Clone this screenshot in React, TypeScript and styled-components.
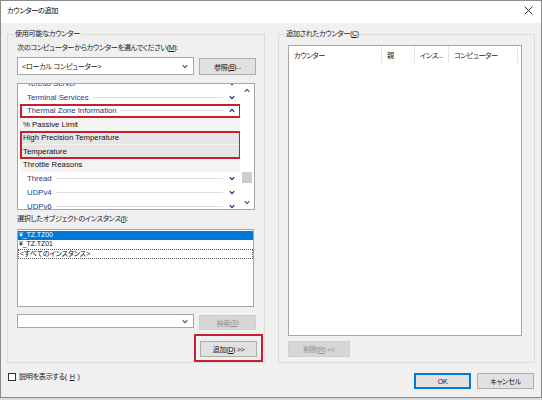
import styled, { createGlobalStyle } from "styled-components";

const GlobalStyle = createGlobalStyle`
  html, body {
    margin: 0;
    padding: 0;
    background: #d9d9d9;
  }
  body {
    font-family: "Liberation Sans", "Noto Sans CJK JP", sans-serif;
    font-size: 7.2px;
    letter-spacing: -0.38px;
    font-feature-settings: "palt";
    color: #1a1a1a;
  }
  * {
    box-sizing: border-box;
  }
`;

interface TreeItem {
  name: string;
  kind: "object" | "counter";
  expanded?: boolean;
  selected?: boolean;
}

const treeGroups: { marked: boolean; items: TreeItem[] }[] = [
  {
    marked: false,
    items: [
      { name: "Teredo Server", kind: "object" },
      { name: "Terminal Services", kind: "object" },
    ],
  },
  {
    marked: true,
    items: [{ name: "Thermal Zone Information", kind: "object", expanded: true }],
  },
  { marked: false, items: [{ name: "% Passive Limit", kind: "counter" }] },
  {
    marked: true,
    items: [
      { name: "High Precision Temperature", kind: "counter", selected: true },
      { name: "Temperature", kind: "counter", selected: true },
    ],
  },
  {
    marked: false,
    items: [
      { name: "Throttle Reasons", kind: "counter" },
      { name: "Thread", kind: "object" },
      { name: "UDPv4", kind: "object" },
      { name: "UDPv6", kind: "object" },
    ],
  },
];

const instances = ["¥_TZ.TZ00", "¥_TZ.TZ01", "<すべてのインスタンス>"];

const columns = [
  { label: "カウンター", width: 93 },
  { label: "親", width: 33 },
  { label: "インス...", width: 34 },
  { label: "コンピューター", width: 69 },
];

const Chevron = ({ up, color }: { up?: boolean; color: string }) => (
  <svg width="6" height="5" viewBox="0 0 6 5">
    <path
      d={up ? "M0.8 3.8 L3 1.4 L5.2 3.8" : "M0.8 1.2 L3 3.6 L5.2 1.2"}
      fill="none"
      stroke={color}
      strokeWidth="1.3"
    />
  </svg>
);

const App = () => {
  return (
    <>
      <GlobalStyle />
      <Window>
        <TitleBar>
          <Title>カウンターの追加</Title>
          <CloseButton>
            <svg width="9" height="9" viewBox="0 0 9 9">
              <path d="M0.5 0.5 L8.5 8.5 M8.5 0.5 L0.5 8.5" stroke="#222" strokeWidth="0.9" />
            </svg>
          </CloseButton>
        </TitleBar>

        <Body>
          <Columns>
            <LeftGroup>
              <Legend>使用可能なカウンター</Legend>
              <Prompt>
                次のコンピューターからカウンターを選んでください(<u>M</u>):
              </Prompt>
              <ComboRow>
                <Combo height={18}>
                  <span>&lt;ローカル コンピューター&gt;</span>
                  <Chevron color="#606060" />
                </Combo>
                <Button width={57} height={17}>
                  参照(<u>B</u>)...
                </Button>
              </ComboRow>

              <TreeBox>
                <TreeScroll>
                  <TreeContent>
                    {treeGroups.map((group, gi) => (
                      <TreeGroup key={gi} marked={group.marked}>
                        {group.items.map((item) =>
                          item.kind === "object" ? (
                            <ObjectRow key={item.name}>
                              <span>{item.name}</span>
                              <Rule />
                              <Chevron up={item.expanded} color="#1b3c84" />
                            </ObjectRow>
                          ) : (
                            <CounterRow key={item.name} selected={item.selected}>
                              {item.name}
                            </CounterRow>
                          )
                        )}
                      </TreeGroup>
                    ))}
                  </TreeContent>
                </TreeScroll>
                <ScrollBar>
                  <ScrollArrow>
                    <Chevron up color="#606060" />
                  </ScrollArrow>
                  <ScrollTrack>
                    <ScrollThumb offset={75} />
                  </ScrollTrack>
                  <ScrollArrow>
                    <Chevron color="#606060" />
                  </ScrollArrow>
                </ScrollBar>
              </TreeBox>

              <Prompt>
                選択したオブジェクトのインスタンス(<u>I</u>):
              </Prompt>
              <InstanceBox>
                {instances.map((name, i) => (
                  <InstanceRow key={name} selected={i === 0} focused={i === 2}>
                    {name}
                  </InstanceRow>
                ))}
              </InstanceBox>

              <SearchRow>
                <Combo height={14}>
                  <span />
                  <Chevron color="#606060" />
                </Combo>
                <Button width={57} height={15} disabled>
                  検索(<u>S</u>)
                </Button>
              </SearchRow>

              <AddFrame>
                <Button width={57} height={16}>
                  追加(<u>D</u>) &gt;&gt;
                </Button>
              </AddFrame>
            </LeftGroup>

            <RightGroup>
              <Legend>
                追加されたカウンター(<u>C</u>)
              </Legend>
              <AddedList>
                <HeaderRow>
                  {columns.map((col) => (
                    <HeaderCell key={col.label} width={col.width}>
                      {col.label}
                    </HeaderCell>
                  ))}
                </HeaderRow>
              </AddedList>
              <Button width={62} height={16} disabled>
                削除(<u>R</u>) &lt;&lt;
              </Button>
            </RightGroup>
          </Columns>

          <Footer>
            <CheckLabel>
              <CheckBox />
              説明を表示する(<u>H</u>)
            </CheckLabel>
            <FooterButtons>
              <Button width={57} height={16} primary>
                OK
              </Button>
              <Button width={57} height={16}>
                キャンセル
              </Button>
            </FooterButtons>
          </Footer>
        </Body>
      </Window>
    </>
  );
};

const Window = styled.div`
  width: 542px;
  height: 398px;
  border: 1px solid #8c8c8c;
  background: #f0f0f0;
  display: flex;
  flex-direction: column;
`;

const TitleBar = styled.div`
  height: 22px;
  background: #ffffff;
  display: flex;
  align-items: center;
  justify-content: space-between;
  padding: 0 8px 4px 6px;
`;

const Title = styled.div`
  color: #000;
`;

const CloseButton = styled.div`
  display: flex;
  align-items: center;
`;

const Body = styled.div`
  flex: 1;
  display: flex;
  flex-direction: column;
  padding: 6px 6px 0 6px;
`;

const Columns = styled.div`
  display: flex;
  gap: 13px;
`;

const GroupBox = styled.fieldset`
  margin: 0;
  height: 334px;
  border: 1px solid #dcdcdc;
  display: flex;
  flex-direction: column;
  align-items: flex-start;
`;

const LeftGroup = styled(GroupBox)`
  width: 258px;
  padding: 0 7px 0 9px;
`;

const RightGroup = styled(GroupBox)`
  width: 257px;
  padding: 0 11px 0 9px;
`;

const Legend = styled.legend`
  line-height: 10px;
  padding: 0 1px;
  margin-left: -3px;
  color: #1a1a1a;
`;

const Prompt = styled.div`
  line-height: 10px;
  margin-top: 4px;
  color: #1a1a1a;
`;

const ComboRow = styled.div`
  display: flex;
  align-items: flex-end;
  gap: 5px;
  margin-top: 4px;
  width: 100%;
`;

const Combo = styled.div<{ height: number }>`
  width: 177px;
  height: ${({ height }) => height}px;
  background: #ffffff;
  border: 1px solid #a6a6a6;
  display: flex;
  align-items: center;
  justify-content: space-between;
  padding: 0 5px 0 4px;
  color: #1a1a1a;
`;

const Button = styled.div<{
  width: number;
  height: number;
  disabled?: boolean;
  primary?: boolean;
}>`
  width: ${({ width }) => width}px;
  height: ${({ height }) => height}px;
  display: flex;
  align-items: center;
  justify-content: center;
  background: ${({ disabled }) => (disabled ? "#d6d6d6" : "#e1e1e1")};
  border: 1px solid
    ${({ disabled, primary }) =>
      primary ? "#0078d7" : disabled ? "#cfcfcf" : "#adadad"};
  box-shadow: ${({ primary }) => (primary ? "inset 0 0 0 1px #0078d7" : "none")};
  color: ${({ disabled }) => (disabled ? "#8f8f8f" : "#1a1a1a")};
  flex-shrink: 0;
`;

const TreeBox = styled.div`
  margin-top: 8px;
  width: 238px;
  height: 127px;
  background: #ffffff;
  border: 1px solid #a6a6a6;
  display: flex;
`;

const TreeScroll = styled.div`
  flex: 1;
  overflow: hidden;
`;

/* scrolled list: the first row is partly hidden above the top edge */
const TreeContent = styled.div`
  margin-top: -7px;
  letter-spacing: 0;
  font-size: 7.8px;
`;

const TreeGroup = styled.div<{ marked: boolean }>`
  position: relative;
  &::after {
    content: "";
    display: ${({ marked }) => (marked ? "block" : "none")};
    position: absolute;
    left: 2px;
    right: -1px;
    top: -0.5px;
    bottom: -0.5px;
    border: 2px solid #c4202e;
  }
`;

const ObjectRow = styled.div`
  height: 13.6px;
  display: flex;
  align-items: center;
  padding: 0 5px 0 9px;
  color: #1b3c84;
  white-space: nowrap;
`;

const Rule = styled.div`
  flex: 1;
  height: 1px;
  background: #dedede;
  margin: 0 6px 0 4px;
`;

const CounterRow = styled.div<{ selected?: boolean }>`
  height: 13.6px;
  display: flex;
  align-items: center;
  padding-left: 3px;
  margin-left: 2px;
  background: ${({ selected }) => (selected ? "#e6e6e6" : "#f3f3f3")};
  border-bottom: 1px solid ${({ selected }) => (selected ? "#f3f3f3" : "transparent")};
  color: #111;
`;

const ScrollBar = styled.div`
  width: 14px;
  display: flex;
  flex-direction: column;
  background: #ffffff;
`;

const ScrollArrow = styled.div`
  height: 13px;
  display: flex;
  align-items: center;
  justify-content: center;
`;

const ScrollTrack = styled.div`
  flex: 1;
  padding: 0 2px;
`;

const ScrollThumb = styled.div<{ offset: number }>`
  margin-top: ${({ offset }) => offset}px;
  height: 11px;
  background: #cdcdcd;
`;

const InstanceBox = styled.div`
  margin-top: 5px;
  width: 237px;
  height: 78px;
  background: #ffffff;
  border: 1px solid #a6a6a6;
  padding-top: 1px;
  letter-spacing: -0.1px;
`;

const InstanceRow = styled.div<{ selected?: boolean; focused?: boolean }>`
  height: ${({ focused }) => (focused ? 10 : 9)}px;
  line-height: 8px;
  font-size: 7px;
  padding-left: 1px;
  background: ${({ selected }) => (selected ? "#0078d7" : "transparent")};
  color: ${({ selected }) => (selected ? "#ffffff" : "#111")};
  border: ${({ focused }) => (focused ? "1px dotted #555" : "none")};
`;

const SearchRow = styled.div`
  display: flex;
  align-items: flex-start;
  gap: 5px;
  margin-top: 7px;
  width: 100%;
  & > :last-child {
    margin-top: 1px;
  }
`;

const AddFrame = styled.div`
  align-self: flex-end;
  margin: 4px -6px 0 0;
  border: 2px solid #c4202e;
  padding: 5px 4px 3px 4px;
`;

const AddedList = styled.div`
  margin-top: 6px;
  width: 234px;
  height: 291px;
  background: #ffffff;
  border: 1px solid #a6a6a6;
  margin-bottom: 5px;
`;

const HeaderRow = styled.div`
  display: flex;
  height: 17px;
`;

const HeaderCell = styled.div<{ width: number }>`
  width: ${({ width }) => width}px;
  border-right: 1px solid #e5e5e5;
  display: flex;
  align-items: center;
  padding-left: 5px;
  white-space: nowrap;
  overflow: hidden;
  color: #1a1a1a;
`;

const Footer = styled.div`
  display: flex;
  justify-content: space-between;
  align-items: flex-start;
  margin-top: 9px;
  padding-right: 1px;
`;

const CheckLabel = styled.div`
  display: flex;
  align-items: center;
  gap: 3px;
  margin-left: 1px;
  line-height: 10px;
`;

const CheckBox = styled.div`
  width: 8px;
  height: 8px;
  border: 1px solid #333;
  background: #fff;
`;

const FooterButtons = styled.div`
  display: flex;
  gap: 6px;
  margin-top: 1px;
`;

export default App;
